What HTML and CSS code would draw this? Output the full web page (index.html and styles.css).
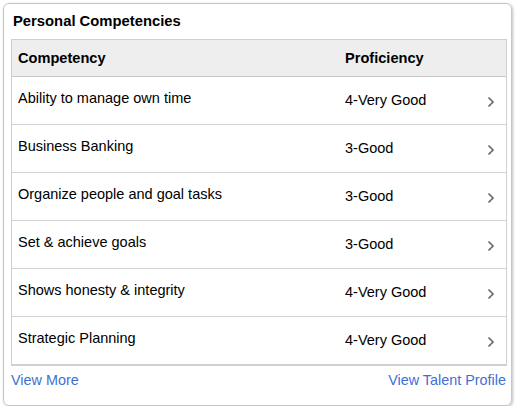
FILE: index.html
```html
<!DOCTYPE html>
<html>
<head>
<meta charset="utf-8">
<link rel="stylesheet" href="styles.css">
</head>
<body>
<div class="card">
  <h2 class="title">Personal Competencies</h2>
  <div class="grid">
    <div class="row head">
      <div class="c1">Competency</div>
      <div class="c2">Proficiency</div>
    </div>
    <div class="row"><div class="c1">Ability to manage own time</div><div class="c2">4-Very Good</div><svg class="chev" width="8" height="12" viewBox="0 0 8 12"><path d="M1.5 1.5 L6 6 L1.5 10.5" fill="none" stroke="#666" stroke-width="1.6"/></svg></div>
    <div class="row"><div class="c1">Business Banking</div><div class="c2">3-Good</div><svg class="chev" width="8" height="12" viewBox="0 0 8 12"><path d="M1.5 1.5 L6 6 L1.5 10.5" fill="none" stroke="#666" stroke-width="1.6"/></svg></div>
    <div class="row"><div class="c1">Organize people and goal tasks</div><div class="c2">3-Good</div><svg class="chev" width="8" height="12" viewBox="0 0 8 12"><path d="M1.5 1.5 L6 6 L1.5 10.5" fill="none" stroke="#666" stroke-width="1.6"/></svg></div>
    <div class="row"><div class="c1">Set &amp; achieve goals</div><div class="c2">3-Good</div><svg class="chev" width="8" height="12" viewBox="0 0 8 12"><path d="M1.5 1.5 L6 6 L1.5 10.5" fill="none" stroke="#666" stroke-width="1.6"/></svg></div>
    <div class="row"><div class="c1">Shows honesty &amp; integrity</div><div class="c2">4-Very Good</div><svg class="chev" width="8" height="12" viewBox="0 0 8 12"><path d="M1.5 1.5 L6 6 L1.5 10.5" fill="none" stroke="#666" stroke-width="1.6"/></svg></div>
    <div class="row last"><div class="c1">Strategic Planning</div><div class="c2">4-Very Good</div><svg class="chev" width="8" height="12" viewBox="0 0 8 12"><path d="M1.5 1.5 L6 6 L1.5 10.5" fill="none" stroke="#666" stroke-width="1.6"/></svg></div>
  </div>
  <div class="links">
    <a href="#">View More</a>
    <a href="#">View Talent Profile</a>
  </div>
</div>
</body>
</html>
```
FILE: styles.css
```css
html, body {
  margin: 0;
  padding: 0;
  background: #fff;
}
body {
  font-family: "Liberation Sans", Arial, sans-serif;
  color: #000;
}
.card {
  box-sizing: border-box;
  margin: 3px 0 0 3px;
  width: 509px;
  height: 403px;
  border: 1px solid #c6c6c6;
  border-radius: 6px;
  box-shadow: 1px 1px 3px rgba(0,0,0,0.25);
  padding: 0 4px 0 7px;
}
.title {
  margin: 0;
  font-size: 14.8px;
  font-weight: bold;
  line-height: 18px;
  padding: 8px 0 0 2px;
  height: 27px;
}
.grid {
  width: 496px;
  border: 1px solid #cfcfcf;
  border-bottom: 2px solid #d0d0d0;
  box-sizing: border-box;
}
.row {
  display: flex;
  align-items: center;
  height: 48px;
  border-bottom: 1px solid #d4d4d4;
  box-sizing: border-box;
  font-size: 14.5px;
  position: relative;
}
.row.last {
  border-bottom: none;
  height: 47px;
}
.row.head {
  height: 37px;
  background: #eeeeee;
  font-weight: bold;
  font-size: 14.6px;
  border-bottom: 1px solid #c8c8c8;
}
.c1 {
  width: 327px;
  padding-left: 6px;
}
.row:not(.head) .c1 {
  margin-top: -5px;
}
.c2 {
  flex: 1;
}
.row:not(.head) .c2 {
  margin-top: -1px;
}
.chev {
  margin-right: 11px;
  margin-top: 3px;
}
.links {
  display: flex;
  justify-content: space-between;
  width: 495px;
  padding-top: 6px;
  font-size: 14.4px;
}
.links a {
  color: #3f6fd3;
  text-decoration: none;
}
```
